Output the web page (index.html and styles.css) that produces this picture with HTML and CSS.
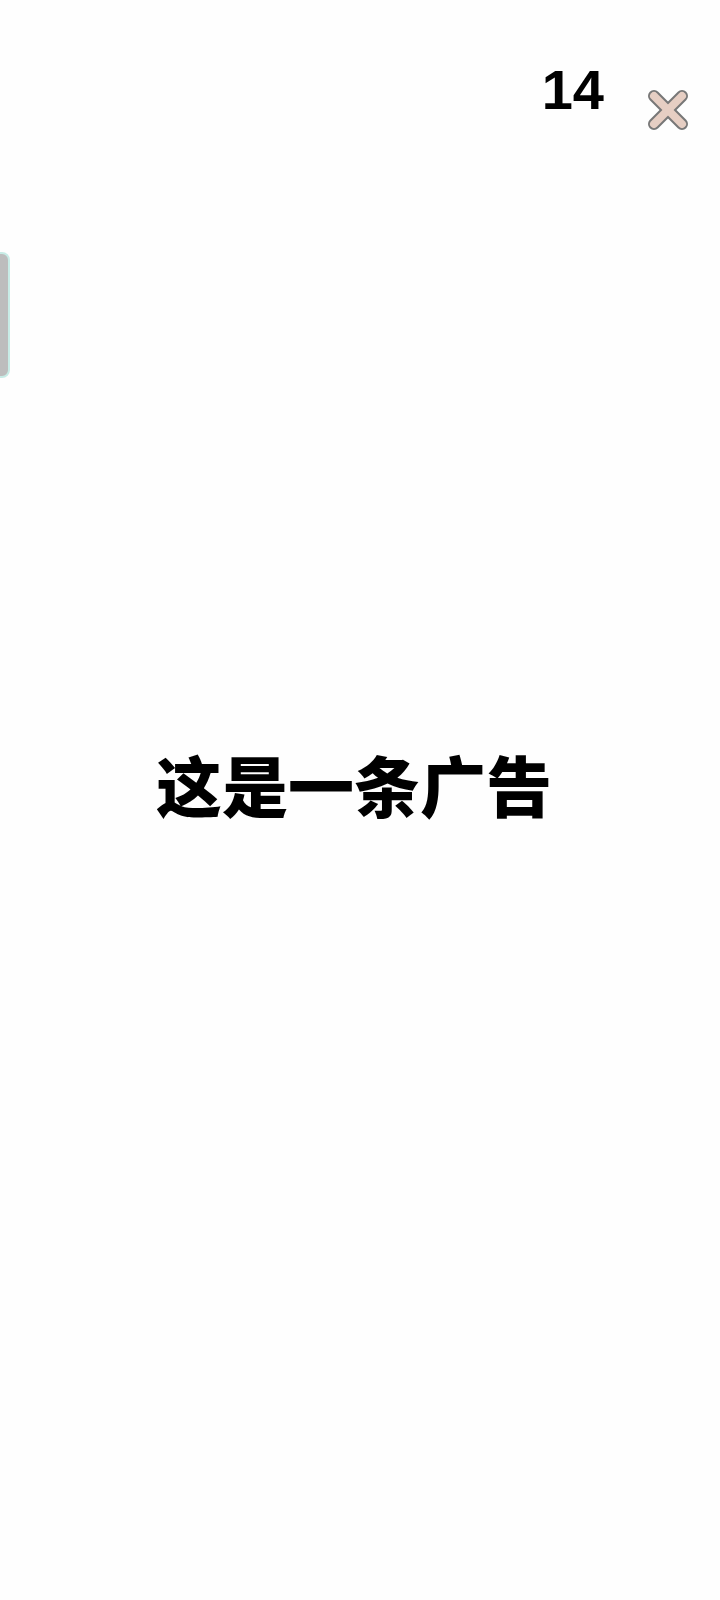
FILE: index.html
```html
<!DOCTYPE html>
<html lang="zh-CN">
<head>
<meta charset="utf-8">
<title>广告</title>
<link rel="stylesheet" href="styles.css">
</head>
<body>
<div class="page">
  <div class="side-tab"></div>
  <header class="topbar">
    <span class="count">14</span>
    <svg class="close" viewBox="0 0 40 40" aria-label="关闭">
      <g stroke="#777" stroke-width="12" stroke-linecap="round">
        <line x1="6" y1="6" x2="34" y2="34"/>
        <line x1="34" y1="6" x2="6" y2="34"/>
      </g>
      <g stroke="#e6cec3" stroke-width="8" stroke-linecap="round">
        <line x1="6" y1="6" x2="34" y2="34"/>
        <line x1="34" y1="6" x2="6" y2="34"/>
      </g>
    </svg>
  </header>
  <main class="content">
    <h1 class="headline">这是一条广告</h1>
  </main>
</div>
</body>
</html>
```

FILE: styles.css
```css
html, body {
  margin: 0;
  padding: 0;
  background: #fefefe;
}
.page {
  position: relative;
  width: 720px;
  height: 1600px;
  display: flex;
  flex-direction: column;
  background: #fefefe;
  overflow: hidden;
}
.side-tab {
  position: absolute;
  left: -10px;
  top: 252px;
  width: 16px;
  height: 122px;
  background: #bdbdbd;
  border: 2px solid #c8ece6;
  border-radius: 8px;
}
.topbar {
  display: flex;
  justify-content: flex-end;
  align-items: flex-start;
  padding: 62px 32px 0 0;
  gap: 44px;
}
.count {
  font-family: "Liberation Sans", Arial, sans-serif;
  font-weight: bold;
  font-size: 56px;
  line-height: 1;
  color: #000;
}
.close {
  width: 40px;
  height: 40px;
  margin-top: 28px;
}
.content {
  display: flex;
  justify-content: center;
  padding-top: 620px;
}
.headline {
  margin: 0;
  font-family: "Noto Sans CJK SC", sans-serif;
  font-weight: 900;
  font-size: 66px;
  line-height: 1;
  color: #000;
  padding-right: 12px;
}
```
